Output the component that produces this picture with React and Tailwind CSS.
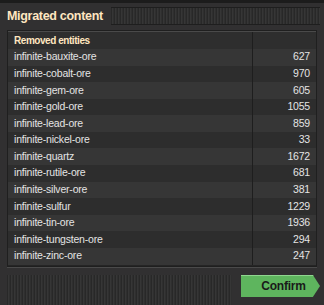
const ROWS = [
  ['infinite-bauxite-ore', 627],
  ['infinite-cobalt-ore', 970],
  ['infinite-gem-ore', 605],
  ['infinite-gold-ore', 1055],
  ['infinite-lead-ore', 859],
  ['infinite-nickel-ore', 33],
  ['infinite-quartz', 1672],
  ['infinite-rutile-ore', 681],
  ['infinite-silver-ore', 381],
  ['infinite-sulfur', 1229],
  ['infinite-tin-ore', 1936],
  ['infinite-tungsten-ore', 294],
  ['infinite-zinc-ore', 247],
];

// vertical grip texture used by Factorio-style drag handles
const GRIP =
  'bg-[repeating-linear-gradient(90deg,#282828_0px,#282828_1px,#363636_1px,#363636_2px,#2f2f2f_2px,#2f2f2f_3px)]';

export default function App() {
  return (
    <div className="flex h-[305px] w-[324px] flex-col overflow-hidden border-t-[3px] border-[#1c1c1c] bg-[#313031] font-['Liberation_Sans',Arial,sans-serif]">
      <div className="mt-[4px] flex h-[18px] items-center px-[7px]">
        <span className="text-[12.5px] font-bold leading-none tracking-[-0.3px] text-[#ffe6c0]">Migrated content</span>
        <div className={`ml-[8px] mr-[-3px] h-[18px] flex-1 ${GRIP} shadow-[inset_0_1px_0_#1e1e1e,inset_0_-1px_0_#1e1e1e]`} />
      </div>

      <div className="mx-[7px] mt-[5px] h-[237px] border border-[#1f1f1f] bg-[#252525] shadow-[0_1px_0_#4a4a4a]">
        <div className="flex h-[18px] items-center border-t border-[#4a4a4a] bg-[#2e2e2e]">
          <span className="flex-1 pl-[6px] text-[10px] font-bold tracking-[-0.45px] text-[#ffe6c0]">Removed entities</span>
          <span className="h-full w-[64px] border-l border-[#1e1e1e]" />
        </div>
        {ROWS.map(([name, n], i) => (
          <div
            key={name}
            className={`flex h-[16.58px] items-center ${i % 2 === 0 ? 'bg-[#363636]' : 'bg-[#2d2d2d]'}`}
          >
            <span className="flex-1 pl-[6px] text-[10.5px] tracking-[-0.2px] text-[#e4e4e4]">{name}</span>
            <span className="flex h-full w-[64px] items-center justify-end border-l border-[#1e1e1e] pr-[6px] text-[10.5px] tracking-[-0.2px] text-[#e4e4e4]">
              {n}
            </span>
          </div>
        ))}
      </div>

      <div className="mt-[8px] flex flex-1 items-start gap-[9px] pl-[7px]">
        <div className={`h-full flex-1 ${GRIP}`} />
        <button className="mr-[4px] flex h-[22px] w-[79px] items-center justify-center bg-[#5eb55e] pl-[6px] text-[12px] font-bold tracking-[-0.2px] text-[#1a1a1a] shadow-[inset_0_1px_0_#8fd68f] [clip-path:polygon(0_0,91%_0,100%_50%,91%_100%,0_100%)]">
          Confirm
        </button>
      </div>
    </div>
  );
}
